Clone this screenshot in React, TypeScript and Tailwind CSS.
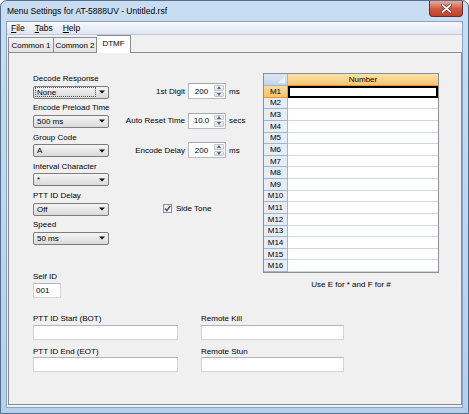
import React from "react";

const ui = "font-['Liberation_Sans',Arial,sans-serif] text-[8px] leading-[11px] text-black whitespace-nowrap";

function Arrow() {
  return (
    <svg width="6" height="4" viewBox="0 0 6 4">
      <path d="M0 0.5h6L3 3.5z" fill="#111" />
    </svg>
  );
}

function Combo({ value, focused = false }: { value: string; focused?: boolean }) {
  return (
    <div className="mt-[1.5px] flex h-[13px] w-[76px] items-center rounded-[2px] border border-[#7c7c7c] bg-linear-to-b from-[#f5f5f5] to-[#d9d9d9] pl-[1px] pr-[3px]">
      {focused ? (
        <div className="flex h-[10px] w-[61px] items-center border border-dotted border-[#555] pl-[1px]">{value}</div>
      ) : (
        <div className="flex-1 pl-[2px]">{value}</div>
      )}
      <div className="ml-auto flex items-center">
        <Arrow />
      </div>
    </div>
  );
}

function Field({ label, value }: { label: string; value: string }) {
  return (
    <div className="flex flex-col">
      <div>{label}</div>
      <Combo value={value} focused={label === "Decode Response"} />
    </div>
  );
}

function SpinBtn({ up = false }: { up?: boolean }) {
  return (
    <div className="flex flex-1 items-center justify-center rounded-[1px] border border-[#c3c6cc] bg-linear-to-b from-[#f7f7f7] to-[#e1e1e1]">
      <svg width="4" height="3" viewBox="0 0 4 3">
        <path d={up ? "M0 3h4L2 0z" : "M0 0h4L2 3z"} fill="#4f6390" />
      </svg>
    </div>
  );
}

function Spin({ label, value, unit }: { label: string; value: string; unit: string }) {
  return (
    <div className="flex h-[16px] items-center">
      <div className="w-[76px] text-right">{label}</div>
      <div className="ml-[3px] flex h-[16px] w-[38px] border border-[#b6b9bf] border-t-[#a3a6ad] bg-white">
        <div className="flex flex-1 items-center justify-center">{value}</div>
        <div className="flex w-[11px] flex-col gap-px py-px pr-px">
          <SpinBtn up />
          <SpinBtn />
        </div>
      </div>
      <div className="ml-[3px]">{unit}</div>
    </div>
  );
}

function TextBox({ className }: { className: string }) {
  return <div className={"mt-[0.5px] h-[15px] border border-[#d3d5d9] border-t-[#b3b5ba] bg-white " + className} />;
}

function Grid() {
  const rows = Array.from({ length: 16 }, (_, i) => "M" + (i + 1));
  return (
    <div className="flex w-[176px] flex-col border border-[#8c8e91] bg-white">
      <div className="flex h-[12px]">
        <div className="relative w-[24px] border-r border-b border-[#9eb6ce] bg-linear-to-b from-[#dbe6f4] to-[#c3d5ec]">
          <svg className="absolute right-[2px] bottom-[2px]" width="7" height="7" viewBox="0 0 7 7">
            <path d="M7 0v7H0z" fill="#eef3fa" />
          </svg>
        </div>
        <div className="flex flex-1 items-center justify-center border-b border-[#f29536] bg-linear-to-b from-[#fae3ab] to-[#f5c56c]">
          Number
        </div>
      </div>
      {rows.map((r, i) => (
        <div key={r} className="flex h-[11.625px]">
          <div
            className={
              i === 0
                ? "flex w-[24px] items-center justify-center border-r border-b border-[#f29536] bg-linear-to-b from-[#f9dca0] to-[#f3c466]"
                : "flex w-[24px] items-center justify-center border-r border-b border-[#9eb6ce] bg-[#e6edf7]"
            }
          >
            {r}
          </div>
          <div className={i === 0 ? "flex-1 border-2 border-black" : "flex-1 border-b border-[#d2d6dd]"} />
        </div>
      ))}
    </div>
  );
}

export default function App() {
  return (
    <div className={"flex h-[414px] w-[469px] flex-col rounded-t-[7px] border border-[#51708f] bg-linear-to-b from-[#c9ddf2] to-[#b6cfea] " + ui}>
      {/* Title bar */}
      <div className="flex h-[20px] items-start">
        <div className="pt-[4px] pl-[6px] text-[8.5px] leading-[12px]">Menu Settings for AT-5888UV - Untitled.rsf</div>
        <div className="mr-[5px] ml-auto flex h-[16px] w-[34px] items-center justify-center rounded-b-[4px] border border-t-0 border-[#6a2b22] bg-linear-to-b from-[#e9ab9e] via-[#d35a42] to-[#c1412a]">
          <svg width="11" height="9" viewBox="0 0 11 9">
            <path d="M1.5 1l8 7M9.5 1l-8 7" stroke="#5a2a22" strokeWidth="3.2" strokeLinecap="round" />
            <path d="M1.5 1l8 7M9.5 1l-8 7" stroke="#fff" strokeWidth="1.8" strokeLinecap="round" />
          </svg>
        </div>
      </div>

      {/* Client area */}
      <div className="mx-[5px] mb-[5px] flex flex-1 flex-col border border-[#8aa4c2] bg-[#f0f0f0]">
        {/* Menu */}
        <div className="flex h-[13px] items-center gap-[10px] border-b border-[#c3cad6] bg-linear-to-b from-[#f8f9fc] to-[#dfe5ef] pl-[4px] text-[8.5px]">
          <span>
            <span className="underline">F</span>ile
          </span>
          <span>
            <span className="underline">T</span>abs
          </span>
          <span>
            <span className="underline">H</span>elp
          </span>
        </div>

        {/* Tabs */}
        <div className="flex h-[17px] items-end pl-[1px]">
          <div className="flex h-[15px] w-[46px] items-center justify-center border border-b-0 border-[#898c95] bg-linear-to-b from-[#f3f3f3] to-[#e2e2e2]">
            Common 1
          </div>
          <div className="flex h-[15px] w-[43px] items-center justify-center border border-l-0 border-b-0 border-[#898c95] bg-linear-to-b from-[#f3f3f3] to-[#e2e2e2]">
            Common 2
          </div>
          <div className="relative z-10 -mb-px flex h-[18px] w-[34px] items-start justify-center border border-l-0 border-b-0 border-[#898c95] bg-white pt-[2px]">
            DTMF
          </div>
        </div>

        {/* Tab page */}
        <div className="mb-[2px] ml-[1px] flex flex-1 flex-col border border-[#898c95] bg-[#f0f0f0] pt-[20px] pl-[24px]">
          <div className="flex items-start">
            {/* Left column */}
            <div className="flex w-[76px] flex-col">
              <div className="flex flex-col gap-[3.8px]">
                <Field label="Decode Response" value="None" />
                <Field label="Encode Preload Time" value="500 ms" />
                <Field label="Group Code" value="A" />
                <Field label="Interval Character" value="*" />
                <Field label="PTT ID Delay" value="Off" />
                <Field label="Speed" value="50 ms" />
              </div>
              <div className="mt-[26.5px]">Self ID</div>
              <div className="mt-[0.5px] flex h-[15px] w-[28px] items-center border border-[#d3d5d9] border-t-[#b3b5ba] bg-white pl-[2px]">
                001
              </div>
            </div>

            {/* Middle column */}
            <div className="flex w-[154px] flex-col pt-[10px]">
              <div className="flex flex-col gap-[13.5px]">
                <Spin label="1st Digit" value="200" unit="ms" />
                <Spin label="Auto Reset Time" value="10.0" unit="secs" />
                <Spin label="Encode Delay" value="200" unit="ms" />
              </div>
              <div className="mt-[45px] flex h-[10px] items-center pl-[54px]">
                <div className="flex h-[9px] w-[9px] items-center justify-center border border-[#8e8f8f] bg-linear-to-b from-[#e8e8e8] to-[#fbfbfb]">
                  <svg width="7" height="7" viewBox="0 0 7 7">
                    <path d="M1 3.6l1.8 2L6.2 1" stroke="#3d4f86" strokeWidth="1.5" fill="none" />
                  </svg>
                </div>
                <span className="ml-[4px]">Side Tone</span>
              </div>
            </div>

            {/* Grid column */}
            <div className="flex flex-col">
              <Grid />
              <div className="mt-[6px] text-center">Use E for * and F for #</div>
            </div>
          </div>

          {/* Bottom fields */}
          <div className="mt-[15.5px] grid w-[311px] grid-cols-[145px_143px] gap-x-[23px] gap-y-[6px]">
            <div className="flex flex-col">
              <div>PTT ID Start (BOT)</div>
              <TextBox className="w-[145px]" />
            </div>
            <div className="flex flex-col">
              <div>Remote Kill</div>
              <TextBox className="w-[143px]" />
            </div>
            <div className="flex flex-col">
              <div>PTT ID End (EOT)</div>
              <TextBox className="w-[145px]" />
            </div>
            <div className="flex flex-col">
              <div>Remote Stun</div>
              <TextBox className="w-[143px]" />
            </div>
          </div>
        </div>
      </div>
    </div>
  );
}
